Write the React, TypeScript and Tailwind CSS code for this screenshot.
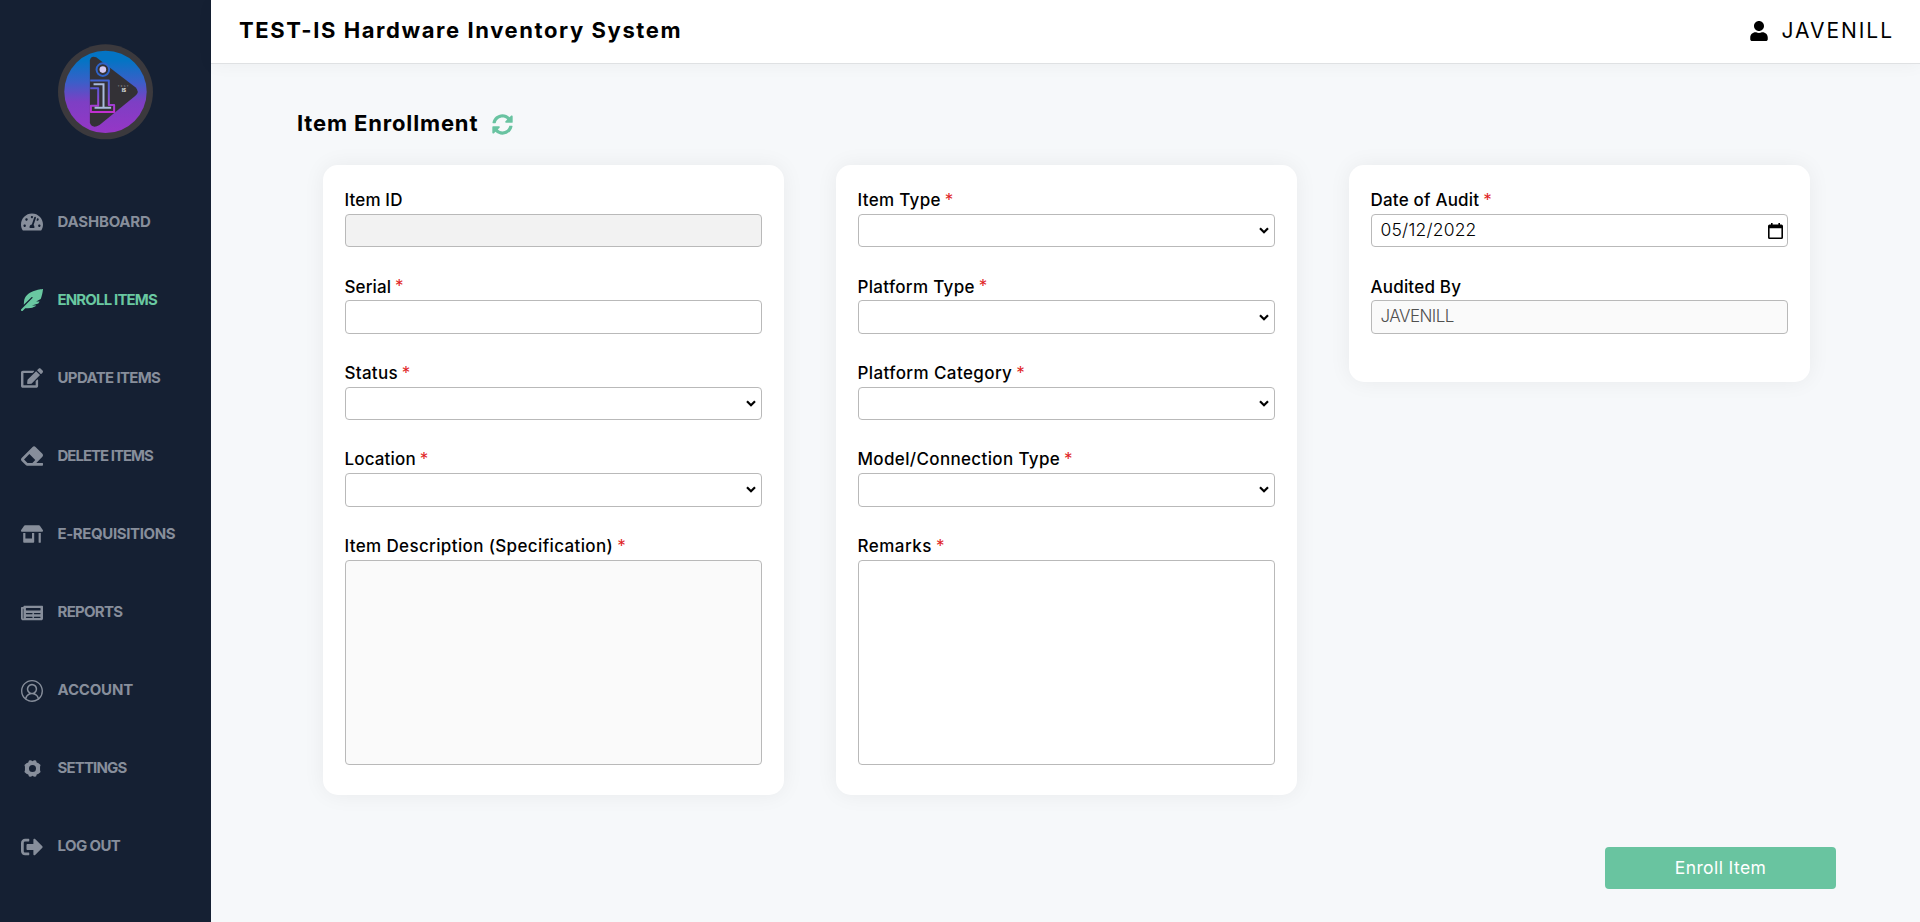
import React from 'react';
import {
  FaEdit,
  FaEraser,
  FaFeatherAlt,
  FaNewspaper,
  FaSignOutAlt,
  FaStoreAlt,
  FaSyncAlt,
  FaTachometerAlt,
  FaUser,
} from 'react-icons/fa';
import { VscAccount } from 'react-icons/vsc';

function Logo() {
  return (
    <svg viewBox="50 39 292 292" className="h-[97px] w-[97px]">
      <defs>
        <linearGradient id="disc" x1="0" y1="0" x2="0" y2="1">
          <stop offset="0.12" stopColor="#0474c4" />
          <stop offset="0.38" stopColor="#3a5fc8" />
          <stop offset="0.62" stopColor="#7d3fc4" />
          <stop offset="1" stopColor="#9636c6" />
        </linearGradient>
        <linearGradient id="neon" x1="0" y1="0" x2="0" y2="1">
          <stop offset="0" stopColor="#3f62d0" />
          <stop offset="0.5" stopColor="#7a4fd8" />
          <stop offset="1" stopColor="#c22fd0" />
        </linearGradient>
      </defs>
      <circle cx="196" cy="186" r="143" fill="#3b393d" />
      <circle cx="196" cy="186" r="124" fill="url(#disc)" />
      <path d="M149 92 Q151 76 168 82 L286 172 Q300 185 286 198 L178 286 Q156 298 149 280 Z" fill="#333136" />
      <circle cx="188" cy="119" r="19" fill="none" stroke="#2f63c8" strokeWidth="6" />
      <circle cx="188" cy="119" r="10" fill="#d3c8f2" />
      <path d="M150 152 H206 V226 H222 V247 H152 V228 H174 V175 H150" fill="none" stroke="url(#neon)" strokeWidth="6" strokeLinejoin="round" />
      <path d="M160 163 H190 V234 M163 234 H213" fill="none" stroke="#a9b9dc" strokeWidth="6" />
      <text x="233" y="171" fill="#8b8a90" className="font-['Inter'] text-[8px] font-semibold tracking-[4px]">TEST</text>
      <text x="245" y="186" fill="#f0f0f0" className="font-['Inter'] text-[14px] font-bold">IS</text>
    </svg>
  );
}

function CogIcon() {
  return (
    <svg viewBox="0 0 16 16" className="h-[17px] w-[17px]" fill="currentColor">
      <path
        fillRule="evenodd"
        d="M4.7.5 L6.5 .2 L8 1.2 L9.5 .2 L11.3 .5 L12 2.3 L13.7 3 L15.6 4.6 L15.1 6.4 L15.1 9.6 L15.6 11.4 L13.7 13 L12 13.7 L11.3 15.5 L9.5 15.8 L8 14.8 L6.5 15.8 L4.7 15.5 L4 13.7 L2.3 13 L.4 11.4 L.9 9.6 L.9 6.4 L.4 4.6 L2.3 3 L4 2.3 Z M8 4.7 A3.3 3.3 0 1 0 8 11.3 A3.3 3.3 0 1 0 8 4.7 Z"
      />
    </svg>
  );
}

const NAV = [
  { label: 'DASHBOARD', icon: <FaTachometerAlt size={22} />, tracking: 'tracking-[-0.2px]' },
  { label: 'ENROLL ITEMS', icon: <FaFeatherAlt size={22} />, tracking: 'tracking-[-0.85px]', active: true },
  { label: 'UPDATE ITEMS', icon: <FaEdit size={22} />, tracking: 'tracking-[-0.65px]' },
  { label: 'DELETE ITEMS', icon: <FaEraser size={22} />, tracking: 'tracking-[-1px]' },
  { label: 'E-REQUISITIONS', icon: <FaStoreAlt size={22} />, tracking: 'tracking-[-0.38px]' },
  { label: 'REPORTS', icon: <FaNewspaper size={22} />, tracking: 'tracking-[-0.72px]' },
  { label: 'ACCOUNT', icon: <VscAccount size={22} />, tracking: 'tracking-[-0.18px]' },
  { label: 'SETTINGS', icon: <CogIcon />, tracking: 'tracking-[-0.85px]' },
  { label: 'LOG OUT', icon: <FaSignOutAlt size={22} />, tracking: 'tracking-[-0.6px]' },
];

function Sidebar() {
  return (
    <aside className="flex w-[211px] shrink-0 flex-col items-center bg-[#152033] pt-[43px]">
      <Logo />
      <nav className="mt-[42px] flex w-full flex-col">
        {NAV.map((n) => (
          <a
            key={n.label}
            className={`flex h-[78.1px] items-center gap-[14.5px] pl-[21px] ${n.active ? 'text-[#69c8a1]' : 'text-[#878e9b]'}`}
          >
            <span className="flex w-[22px] justify-center pt-[2px]">{n.icon}</span>
            <span className={`pt-[1.5px] text-[15px] font-bold whitespace-nowrap ${n.tracking}`}>{n.label}</span>
          </a>
        ))}
      </nav>
    </aside>
  );
}

type FieldProps = { label: string; tracking: string; required?: boolean; children: React.ReactNode };

function Field({ label, tracking, required, children }: FieldProps) {
  return (
    <div className="flex flex-col">
      <label className="flex h-[26px] items-center text-[17px] font-medium whitespace-nowrap text-black">
        <span className={tracking}>{label}</span>
        {required && <span className="ml-[4px] pb-px text-[17px] leading-none font-normal text-[#df1f26]">*</span>}
      </label>
      {children}
    </div>
  );
}

const BOX = 'w-full rounded-[4px] border border-[#b9b9b9]';

function Input({ tone = 'bg-white' }: { tone?: string }) {
  return <input readOnly className={`${BOX} h-[33.4px] ${tone}`} />;
}

function Select() {
  return (
    <div className={`${BOX} flex h-[33.4px] items-center justify-end bg-white pr-[5px]`}>
      <svg viewBox="0 0 10 7" className="h-[7px] w-[10px]" fill="none" stroke="#000" strokeWidth="2.2">
        <path d="M1 1.2 L5 5.2 L9 1.2" />
      </svg>
    </div>
  );
}

function Card({ size, children }: { size: string; children: React.ReactNode }) {
  return (
    <section
      className={`flex w-[461px] flex-col gap-[27px] rounded-[15px] bg-white px-[22px] pt-[23px] shadow-[0_0_22px_rgba(0,0,0,0.06)] ${size}`}
    >
      {children}
    </section>
  );
}

export default function App() {
  return (
    <div className="flex h-[922px] w-[1920px] overflow-hidden bg-[#f6f8fa] font-['Inter',sans-serif]">
      <Sidebar />
      <div className="flex flex-1 flex-col">
        <header className="flex h-16 shrink-0 items-center justify-between border-b border-[#dfe1e3] bg-white pr-[26px] pb-[2px] pl-[28px] text-black shadow-[0_2px_16px_rgba(0,0,0,0.04)]">
          <h1 className="text-[22px] font-bold tracking-[1.58px]">TEST-IS Hardware Inventory System</h1>
          <div className="flex items-center gap-[12px]">
            <FaUser size={20} />
            <span className="text-[21px] tracking-[1.95px]">JAVENILL</span>
          </div>
        </header>

        <main className="flex flex-1 flex-col">
          <div className="mt-[42px] ml-[86px] flex h-[34px] items-center gap-[14px]">
            <h2 className="text-[22px] font-bold tracking-[0.85px] text-black">Item Enrollment</h2>
            <FaSyncAlt size={21} className="mt-[3px] text-[#69c3a1]" />
          </div>

          <div className="mt-[25px] ml-[111.5px] flex h-[630px] items-start gap-[52px]">
            <Card size="h-[630px]">
              <Field label="Item ID" tracking="tracking-[0.15px]">
                <Input tone="bg-[#f2f2f2]" />
              </Field>
              <Field label="Serial" tracking="tracking-[0.1px]" required>
                <Input />
              </Field>
              <Field label="Status" tracking="tracking-[0.28px]" required>
                <Select />
              </Field>
              <Field label="Location" tracking="tracking-[0.15px]" required>
                <Select />
              </Field>
              <Field label="Item Description (Specification)" tracking="tracking-[0.36px]" required>
                <textarea readOnly className={`${BOX} h-[205px] resize-none bg-[#fafafa]`} />
              </Field>
            </Card>

            <Card size="h-[630px]">
              <Field label="Item Type" tracking="tracking-[0.32px]" required>
                <Select />
              </Field>
              <Field label="Platform Type" tracking="tracking-[0.32px]" required>
                <Select />
              </Field>
              <Field label="Platform Category" tracking="tracking-[0.4px]" required>
                <Select />
              </Field>
              <Field label="Model/Connection Type" tracking="tracking-[0.35px]" required>
                <Select />
              </Field>
              <Field label="Remarks" tracking="tracking-[0.5px]" required>
                <textarea readOnly className={`${BOX} h-[205px] resize-none bg-white`} />
              </Field>
            </Card>

            <Card size="h-[217px]">
              <Field label="Date of Audit" tracking="tracking-[0.2px]" required>
                <div className={`${BOX} flex h-[33.4px] items-center justify-between bg-white pr-[4px] pl-[9px]`}>
                  <span className="pb-[2px] text-[17.5px] font-light tracking-[0.2px] text-black">05/12/2022</span>
                  <svg viewBox="0 0 15 16" className="h-4 w-[15px]">
                    <path
                      fillRule="evenodd"
                      d="M3 0 H4.6 V1.4 H10.4 V0 H12 V1.4 H13.4 Q15 1.4 15 3 V14.4 Q15 16 13.4 16 H1.6 Q0 16 0 14.4 V3 Q0 1.4 1.6 1.4 H3 Z M1.6 5.3 V14.4 H13.4 V5.3 Z"
                    />
                  </svg>
                </div>
              </Field>
              <Field label="Audited By" tracking="tracking-[0.2px]">
                <div className={`${BOX} flex h-[33.4px] items-center bg-[#fafafa] pl-[9px]`}>
                  <span className="text-[17px] font-light tracking-[-0.55px] text-[#505050]">JAVENILL</span>
                </div>
              </Field>
            </Card>
          </div>

          <div className="mt-[52px] flex justify-end pr-[84px]">
            <button className="flex h-[42px] w-[231px] items-center justify-center rounded-[4px] bg-[#69c4a0] text-[17.5px] tracking-[0.4px] text-white">
              Enroll Item
            </button>
          </div>
        </main>
      </div>
    </div>
  );
}
